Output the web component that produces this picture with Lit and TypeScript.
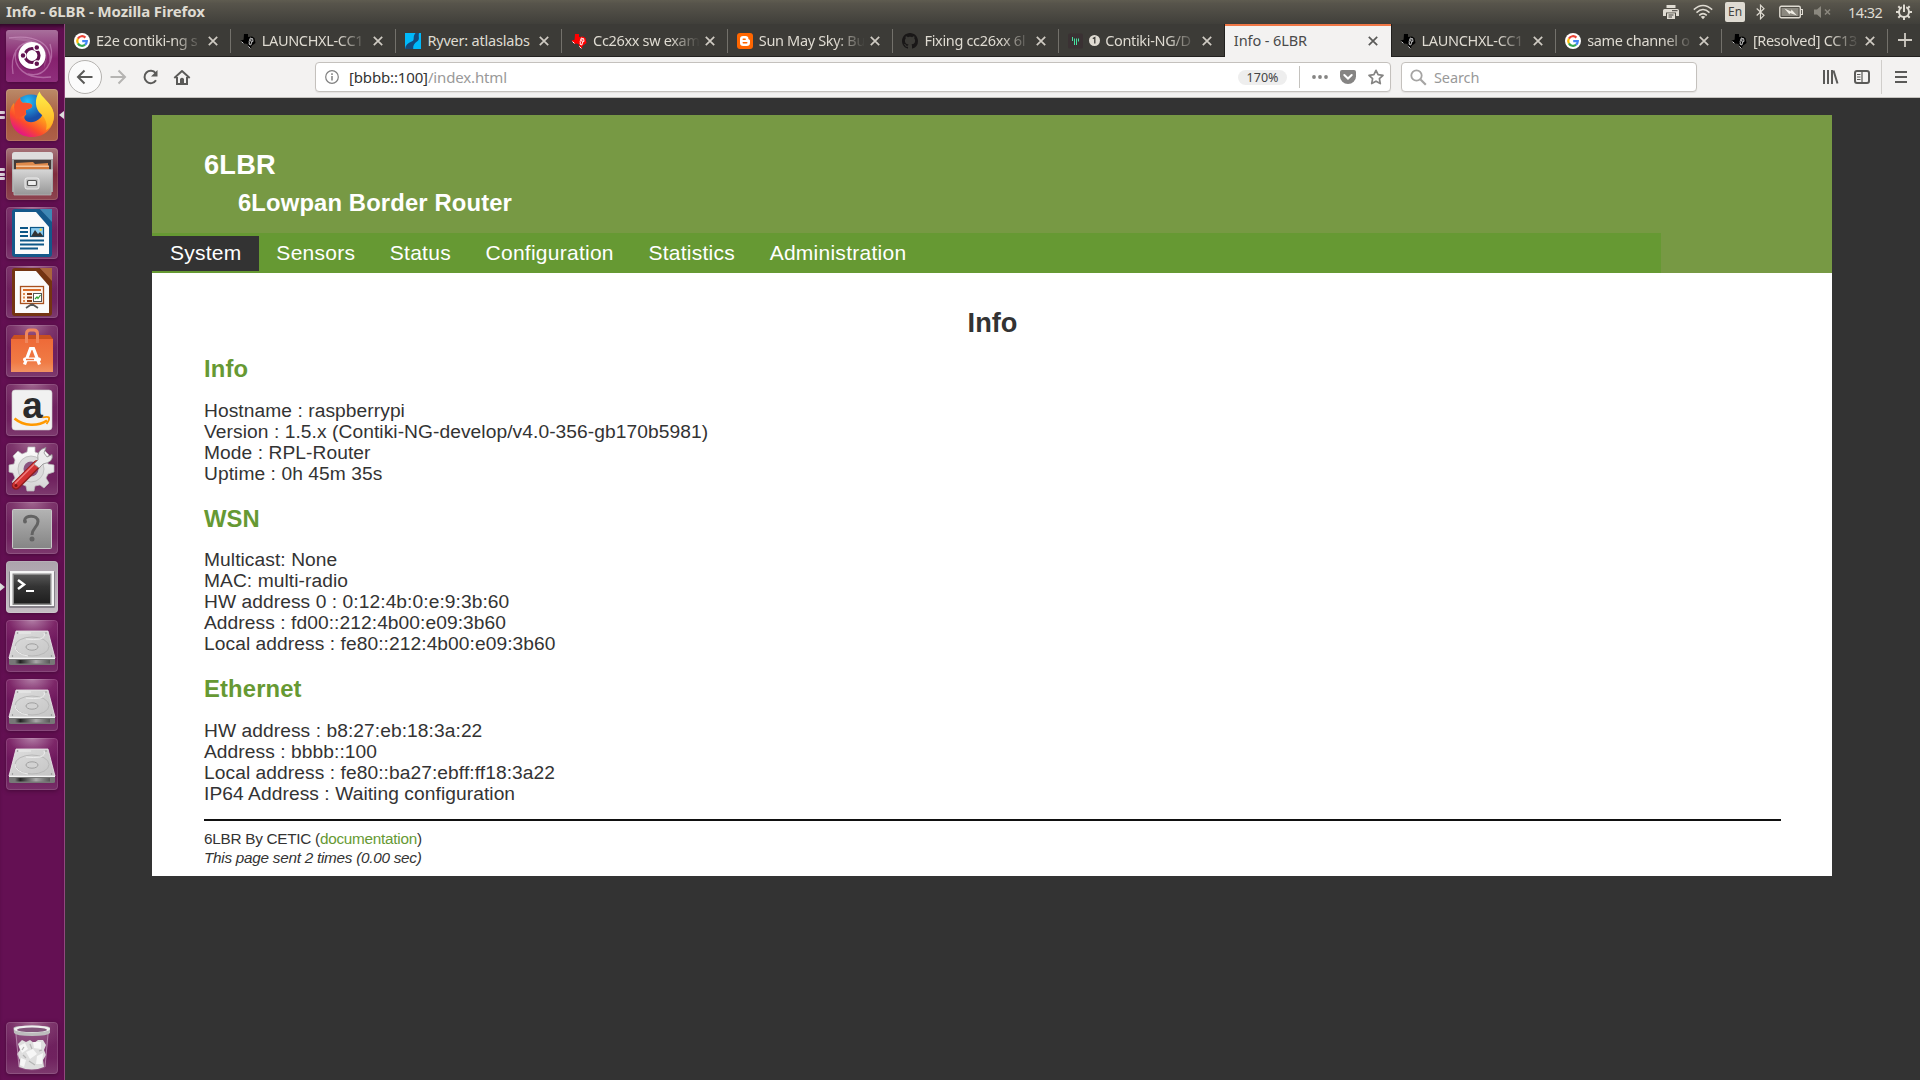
import { LitElement, html, css, svg, nothing } from "lit";
import { customElement } from "lit/decorators.js";

const google = svg`<circle cx="8" cy="8" r="8" fill="#fff"/>
  <g fill="none" stroke-width="2.2">
  <path d="M11.4 4.6A4.8 4.8 0 0 0 3.9 5.6" stroke="#ea4335"/>
  <path d="M3.9 5.6A4.8 4.8 0 0 0 3.9 10.4" stroke="#fbbc05"/>
  <path d="M3.9 10.4A4.8 4.8 0 0 0 11.1 11.7" stroke="#34a853"/>
  <path d="M11.1 11.7A4.8 4.8 0 0 0 12.8 8.2H8.2" stroke="#4285f4"/></g>`;
const texas = (c: string, edge: string) => svg`
  <path d="M4 1H8V4L12 3.5L14.5 5L15.5 10L11.5 13L11 15.5L8.500 14L7.500 11L5 10.500L3.500 11L0.500 7.500L3.600 6.800Z" fill="${c}"/>
  <path d="M11 4.600C9.800 5 9.900 7 9 8.500M9.400 8.600L9.100 11.200L10.800 12L11.600 9.200L13 8.400L12.600 5.600L11.200 5.400L10.600 8.200L11.800 8.400M1.500 8.600L3.500 10.400M8.300 13.400L10.400 15.400" fill="none" stroke="${edge}" stroke-width="1"/>`;
const ryver = svg`<rect width="16" height="16" fill="#00b9fb"/>
  <path d="M10.500 0H14C13 4.500 15.400 6 12 8.600C9 10.800 8 12.500 8.200 16H0C.6 12 3 10 6.600 8.600C10.500 7 7 4 10.500 0Z" fill="#14497c"/>`;
const blogger = svg`<rect width="16" height="16" rx="3" fill="#ff6600"/>
  <path d="M6 3H8.600A2.800 2.800 0 0 1 11.400 5.800C11.400 6.800 13 6.400 13 7.600V9.800A3.200 3.200 0 0 1 9.800 13H6.200A3.200 3.200 0 0 1 3 9.800V6A3 3 0 0 1 6 3Z" fill="#fff"/>
  <path d="M6.200 6.200H8.200M6.200 9.800H9.800" stroke="#ff6600" stroke-width="1.400" stroke-linecap="round"/>`;
const github = svg`<path fill="#191717" fill-rule="evenodd" d="M8 0C3.58 0 0 3.58 0 8c0 3.54 2.29 6.53 5.47 7.59.4.07.55-.17.55-.38 0-.19-.01-.82-.01-1.49-2.01.37-2.53-.49-2.69-.94-.09-.23-.48-.94-.82-1.13-.28-.15-.68-.52-.01-.53.63-.01 1.08.58 1.23.82.72 1.21 1.87.87 2.33.66.07-.52.28-.87.51-1.07-1.78-.2-3.64-.89-3.64-3.95 0-.87.31-1.59.82-2.15-.08-.2-.36-1.02.08-2.12 0 0 .67-.21 2.2.82.64-.18 1.32-.27 2-.27s1.36.09 2 .27c1.53-1.04 2.2-.82 2.2-.82.44 1.1.16 1.92.08 2.12.51.56.82 1.27.82 2.15 0 3.07-1.87 3.75-3.65 3.95.29.25.54.73.54 1.48 0 1.07-.01 1.93-.01 2.2 0 .21.15.46.55.38A8.01 8.01 0 0 0 16 8c0-4.42-3.58-8-8-8z"/>`;
const gitter = svg`<rect y=".5" width="15" height="15" rx="1.500" fill="#3a3133"/>
  <path d="M4.500 4V8M6.500 5.500V12M8.500 5.500V12M10.500 5.500V8.500" stroke="#46e3a0" stroke-width="1"/>`;

interface Tab { title: string; icon: unknown; active?: boolean; badge?: boolean; whole?: boolean }
const tabs: Tab[] = [
  { title: "E2e contiki-ng s", icon: google },
  { title: "LAUNCHXL-CC1", icon: texas("#000", "#ccc") },
  { title: "Ryver: atlaslabs", icon: ryver, whole: true },
  { title: "Cc26xx sw exam", icon: texas("#f00", "#fff") },
  { title: "Sun May Sky: Bu", icon: blogger },
  { title: "Fixing cc26xx 6l", icon: github },
  { title: "Contiki-NG/D", icon: gitter, badge: true },
  { title: "Info - 6LBR", icon: null, active: true },
  { title: "LAUNCHXL-CC1", icon: texas("#000", "#ccc") },
  { title: "same channel o", icon: google },
  { title: "[Resolved] CC13", icon: texas("#000", "#ccc") },
];

const ubuntu = svg`<defs><linearGradient id="ub" x1="0" y1="0" x2="0" y2="1"><stop offset="0" stop-color="#a8709c"/><stop offset=".55" stop-color="#86216e"/><stop offset="1" stop-color="#8f2f7c"/></linearGradient></defs>
  <rect width="52" height="52" rx="3" fill="url(#ub)"/>
  <g fill="none" stroke="#dfb0d6" stroke-opacity=".45" stroke-width="1.3"><path d="M3 8C30 4 46 14 44 32M44 14C50 32 38 48 22 44M7 44C4 24 12 12 26 12M10 20C6 38 20 50 45 47"/></g>
  <path d="M4 9C32 4 48 20 38 38L38 20 24 12Z" fill="#fff" opacity=".13"/>
  <circle cx="26" cy="26.500" r="14" fill="#5b1650" opacity=".45"/><circle cx="26" cy="25.500" r="13.600" fill="#fff"/>
  <circle cx="26" cy="25.500" r="7" fill="none" stroke="#61124f" stroke-width="3.200"/>
  <g fill="#61124f" stroke="#fff" stroke-width="1.300"><circle cx="17" cy="25.500" r="2.900"/><circle cx="30.800" cy="17.400" r="2.900"/><circle cx="30.800" cy="33.700" r="2.900"/></g>`;
const firefox = svg`<defs><linearGradient id="fx" x1=".8" y1=".1" x2=".2" y2=".9"><stop offset="0" stop-color="#ffe226"/><stop offset=".4" stop-color="#ff9a1c"/><stop offset=".72" stop-color="#fb4a2d"/><stop offset="1" stop-color="#e31587"/></linearGradient>
  <radialGradient id="fb" cx=".4" cy=".2"><stop offset="0" stop-color="#23c0f8"/><stop offset="1" stop-color="#1a4ea8"/></radialGradient>
  <linearGradient id="fy" x1="0" y1="0" x2="0" y2="1"><stop offset="0" stop-color="#fff14a"/><stop offset="1" stop-color="#ffac1f"/></linearGradient></defs>
  <circle cx="25" cy="23" r="17.500" fill="url(#fb)"/>
  <path d="M4 26C3.500 20 6 16 8 14L9 18C10 13 12 10 14 8.500C14 11 15 13 17 14C21 13.500 25 14.500 26 16C27 18 24 20 20 21C19 23 21 24 20 26C17 27 18 32 23 33C29 34 36 30 38 22C40 19 36 12 34 9C41 11 47 17 48 26C48 39 39 48 26 48C13 48 4 39 4 26Z" fill="url(#fx)"/>
  <path d="M33.500 2.500C35 8 45 13 47.500 24C49 32 45 39 40 41C42 34 39 29 35 25C29 20 28 10 33.500 2.500Z" fill="url(#fy)"/>
  <path d="M8 18C9 13 12 10 14 8.500C14 11 15 13 17 14C21 13.500 25 14.500 26 16C27 18 24 20 20 21C19 23 21 24 19 26L10 30Z" fill="#f9512c"/>`;
const files = svg`<defs><linearGradient id="fi" x1="0" y1="0" x2="0" y2="1"><stop offset="0" stop-color="#d6d6d6"/><stop offset="1" stop-color="#969696"/></linearGradient></defs>
  <path d="M6 8Q6 4 9 4H44Q47 4 47 8V44H6Z" fill="#a3a3a3"/><path d="M6 11V7Q6 4 9 4H44Q47 4 47 7V11Z" fill="#dedede"/><path d="M8 12H45V24H8Z" fill="#443b38"/>
  <path d="M10 15L27 14 29 16 42 15V24H10Z" fill="#df8a4b"/><path d="M10 17.500H43V24H10Z" fill="#f5c49a"/><path d="M10 19H43V24H10Z" fill="#d47b3a"/>
  <path d="M6.500 21.500H46.500L45 47H8Z" fill="url(#fi)" stroke="#bbb" stroke-width=".7"/>
  <rect x="19" y="30" width="14" height="11" rx="2" fill="#c6c6c6" stroke="#eee"/><rect x="21.500" y="32.500" width="9" height="5" rx="1" fill="#eee" stroke="#555" stroke-width="1.200"/>`;
const doc = (a: string, b: string, inner: unknown) => svg`<path d="M9 2H34L46 14V47Q46 50 43 50H9Q6 50 6 47V5Q6 2 9 2Z" fill="${a}"/>
  <path d="M9 5H30L43 20V47H9Z" fill="#fbfbfb"/><path d="M34 2H46V15Z" fill="${b}"/>${inner}`;
const writer = doc("#14588a", "#3d88b5", svg`<g stroke="#0d5787" stroke-width="2"><path d="M14 21H22M14 25H22M14 29H22M14 33.500H38M14 37.500H38M14 41.500H32"/></g>
  <rect x="24.500" y="20.500" width="13" height="9" fill="#8ccdf0" stroke="#0d5787" stroke-width="1.200"/><path d="M25 29.500L29 23 32 27 34 25 37.500 29.500Z" fill="#333"/><circle cx="34.700" cy="22.700" r="1.200" fill="#f5d33b"/>`);
const impress = doc("#743412", "#a9653c", svg`<rect x="14.500" y="20.500" width="23" height="17" fill="#fff4ea" stroke="#a8501e" stroke-width="1.300"/>
  <path d="M17 24H35" stroke="#d96c28" stroke-width="2"/><path d="M17 28H19M17 31.500H19M17 35H19" stroke="#e08a50" stroke-width="2"/><path d="M21 28H26M21 31.500H26M21 35H26" stroke="#8c3b12" stroke-width="1.800"/>
  <rect x="27.500" y="27.500" width="8" height="8" fill="#fff" stroke="#555"/><path d="M29 33L31 31 32 32.500 34.500 29" stroke="#2ca02c" fill="none" stroke-width="1.200"/><path d="M26 38L20 42M26 38L32 42M26 38V40" stroke="#555" stroke-width="1.700"/>`);
const software = svg`<defs><linearGradient id="sw" x1="0" y1="0" x2="0" y2="1"><stop offset="0" stop-color="#ee6a38"/><stop offset=".7" stop-color="#f07b45"/><stop offset="1" stop-color="#f29262"/></linearGradient></defs>
  <path d="M8 10H44L47 14H5Z" fill="#c94f20"/><rect x="5" y="14" width="42" height="33" fill="url(#sw)"/>
  <path d="M20.500 18V9Q20.500 5 24 5H28Q31.500 5 31.500 9V18" fill="none" stroke="#f0875d" stroke-width="3"/>
  <path d="M18.500 39.500L24.500 23.500H27.500L33.500 39.500" fill="none" stroke="#fff" stroke-width="3.200"/><rect x="17" y="32.500" width="18" height="3.800" rx="1.900" fill="#fff"/><path d="M20 34.500H28" stroke="#ef7640" stroke-width="1.400"/>`;
const amazon = svg`<rect x="6" y="6" width="40" height="40" rx="3" fill="#f1f1f1" stroke="#ccc" stroke-width=".6"/>
  <text x="26.500" y="34" text-anchor="middle" font-family="Liberation Sans" font-weight="700" font-size="37" fill="#2b2b2b">a</text>
  <path d="M8.500 34.500C18 42.500 32 42.500 41 36.500" fill="none" stroke="#f90" stroke-width="2.600"/><path d="M36.500 33.500C40 32.500 42 32.500 43 33.500C43.500 35 42 38 40.500 40" fill="none" stroke="#f90" stroke-width="1.800"/>`;
const settings = svg`<defs><linearGradient id="ge" x1="0" y1="0" x2="0" y2="1"><stop offset="0" stop-color="#fff"/><stop offset="1" stop-color="#d2d2d2"/></linearGradient></defs>
  <path d="M22 4H29V9L34 11 38 7 43 12 40 16.500 42 21 48 22V29L42 31 40 35 43 40 38 45 34 42 29 43 28 48H21L20 43 15 41 11 44 6 39 9 35 7 30 3 29V22L8 21 9 17 7 13 12 8 16 11 21 9Z" fill="url(#ge)" stroke="#bcbcbc" stroke-width=".7"/>
  <circle cx="25" cy="26" r="13" fill="#dcdcdc" stroke="#c2c2c2"/><circle cx="25" cy="26" r="7.500" fill="#8a5580"/>
  <path d="M31 21.500L10 42.500" stroke="#8d1c1c" stroke-width="8.500" stroke-linecap="round"/><path d="M31 21L10 42" stroke="#d23333" stroke-width="6.500" stroke-linecap="round"/><path d="M29 20.500L9 40.500" stroke="#ef8080" stroke-width="1.500"/>
  <path d="M28 21L32 17Q30 7 40 4.500L38 10 41 14 46 11.500Q48 19 37 21L33 25Z" fill="#ececec" stroke="#8f8f8f" stroke-width=".8"/><circle cx="10" cy="42.500" r="1.500" fill="#7a1515"/>`;
const unknown = svg`<defs><linearGradient id="un" x1="0" y1="0" x2="0" y2="1"><stop offset="0" stop-color="#b3b3b3"/><stop offset="1" stop-color="#858585"/></linearGradient></defs>
  <rect x="6.500" y="7.500" width="39" height="39" rx="1" fill="url(#un)" stroke="#c8c8c8"/>
  <path d="M18.500 19C18.500 12.500 32 12.500 32 19.500C32 25 26 26 26 33" fill="none" stroke="#636363" stroke-width="3"/><circle cx="19" cy="19.500" r="1.900" fill="#636363"/><circle cx="26" cy="37" r="2.500" fill="#636363"/>`;
const terminal = svg`<defs><linearGradient id="te" x1="0" y1="0" x2="0" y2="1"><stop offset="0" stop-color="#555"/><stop offset=".4" stop-color="#343434"/><stop offset="1" stop-color="#1e1e1e"/></linearGradient></defs>
  <rect x="3" y="10" width="46" height="37" rx="1.500" fill="#87828a"/><rect x="4" y="10" width="44" height="35" fill="#f5f5f5"/><rect x="6.500" y="12.500" width="39" height="31.500" fill="#8a8a8a"/><rect x="8" y="14" width="36" height="28.500" fill="url(#te)"/>
  <path d="M12 19L18 23.500 12 28" fill="none" stroke="#fff" stroke-width="2.500"/><path d="M20 30H28" stroke="#fff" stroke-width="2"/>`;
const drive = svg`<defs><linearGradient id="dr" x1="0" y1="0" x2="1" y2="1"><stop offset="0" stop-color="#dedede"/><stop offset="1" stop-color="#c4c4c4"/></linearGradient><linearGradient id="ds"><stop offset="0" stop-color="#777"/><stop offset=".15" stop-color="#222"/><stop offset=".6" stop-color="#aaa"/><stop offset="1" stop-color="#555"/></linearGradient></defs>
  <path d="M10 11H42L49 38H3Z" fill="url(#dr)" stroke="#eee" stroke-width=".8"/><path d="M3 38H49V44Q49 45 47 45H5Q3 45 3 44Z" fill="#777"/><rect x="9" y="40" width="35" height="3.500" fill="url(#ds)"/><path d="M3 38.500H49" stroke="#f5f5f5"/>
  <ellipse cx="26" cy="26.500" rx="17" ry="9.500" fill="none" stroke="#b8b8b8"/><path d="M13 13H25M38 13Q40 17 34 19Q28 20 20 19M9 26A17 9.500 0 0 0 22 36" fill="none" stroke="#eee"/>
  <ellipse cx="26" cy="27" rx="6" ry="3.200" fill="#d2d2d2" stroke="#a0a0a0"/><g fill="#888"><circle cx="11.500" cy="13" r=".7"/><circle cx="40" cy="13" r=".7"/><circle cx="6.500" cy="36" r=".7"/><circle cx="45.500" cy="36" r=".7"/></g>`;
const trash = svg`<path d="M9 10H43L39 46Q26 51 13 46Z" fill="#fff" opacity=".12"/>
  <path d="M12 22L16 18 20 20 24 18 28 21 32 18 37 18 40 23 38 28 40 33 37 38 38 45Q26 50 13 45L14 38 11 32 14 28Z" fill="#dedede"/>
  <path d="M13 24L19 21 22 27 16 31ZM27 20L35 20 35 27 28 26ZM20 30L27 27 31 32 24 37ZM31 34L37 31 36 42 30 42ZM15 36L20 38 18 45 14 43Z" fill="#f6f6f6"/>
  <path d="M17 33L20 36M24 22L26 27M33 29L36 28M23 39L29 43M18 25L16 28" stroke="#b5b5b5" stroke-width="1.200"/>
  <path d="M10 12L13 45M42 12L39 45" stroke="#bc91b4" stroke-width=".8"/>
  <path d="M7.500 6Q7.500 3.500 26 3.500T44 6V11Q42 14 26 14T8 11Z" fill="#bdbdbd"/><ellipse cx="26" cy="7" rx="18" ry="3.600" fill="#f0f0f0"/><ellipse cx="26" cy="7.800" rx="15" ry="2.300" fill="#81567a"/>`;

interface Tile { icon: unknown; cls: string; pips?: number; focus?: boolean }
const tiles: Tile[] = [
  { icon: ubuntu, cls: "dash" }, { icon: firefox, cls: "orange", pips: 2, focus: true }, { icon: files, cls: "red", pips: 3 },
  { icon: writer, cls: "" }, { icon: impress, cls: "" }, { icon: software, cls: "" }, { icon: amazon, cls: "" },
  { icon: settings, cls: "" }, { icon: unknown, cls: "" }, { icon: terminal, cls: "light", pips: 1 },
  { icon: drive, cls: "disk" }, { icon: drive, cls: "disk" }, { icon: drive, cls: "disk" },
];

const sections = [
  { name: "Info", cls: "", lines: ["Hostname : raspberrypi", "Version : 1.5.x (Contiki-NG-develop/v4.0-356-gb170b5981)", "Mode : RPL-Router", "Uptime : 0h 45m 35s"] },
  { name: "WSN", cls: "tight", lines: ["Multicast: None", "MAC: multi-radio", "HW address 0 : 0:12:4b:0:e:9:3b:60", "Address : fd00::212:4b00:e09:3b60", "Local address : fe80::212:4b00:e09:3b60"] },
  { name: "Ethernet", cls: "", lines: ["HW address : b8:27:eb:18:3a:22", "Address : bbbb::100", "Local address : fe80::ba27:ebff:ff18:3a22", "IP64 Address : Waiting configuration"] },
];

@customElement("app-root")
export class AppRoot extends LitElement {
  static styles = css`
    :host { display: flex; flex-direction: column; width: 1920px; height: 1080px; overflow: hidden; background: #333; font-family: "Noto Sans", "Open Sans", sans-serif; }
    * { box-sizing: border-box; }
    svg { display: block; flex: none; }
    .panel { height: 24px; flex: none; display: flex; align-items: center; justify-content: space-between; padding: 0 8px 0 6px; background: linear-gradient(#5f5c50, #57544b 15%, #403f3a); color: #dfdbd2; }
    .title { font-size: 15px; font-weight: 700; letter-spacing: -.09px; line-height: 22px; padding-bottom: 2px; white-space: pre; }
    .tray { display: flex; align-items: center; }
    .clock { font-size: 14.500px; line-height: 24px; width: 36px; letter-spacing: -.55px; margin: 0 12px 0 16px; white-space: nowrap; }
    .lang { width: 20px; height: 20px; border-radius: 2px; background: #dfdbd2; color: #45433e; font-size: 12px; line-height: 20px; text-align: center; margin: 0 11px 0 12px; }
    .wifi { margin-left: 14px; }
    .battery { margin-left: 14px; }
    .sound { margin-left: 11px; }
    .body { flex: 1; display: flex; min-height: 0; }
    .launcher { width: 65px; flex: none; display: flex; flex-direction: column; justify-content: space-between; background: #641053; border-right: 1px solid #92487f; padding: 6px 0; box-shadow: inset 0 5px 5px -3px #25061e; }
    .tiles { display: flex; flex-direction: column; gap: 7px; }
    .slot { display: grid; grid-template-columns: 6px 52px 6px; align-items: center; height: 52px; }
    .pips { display: flex; flex-direction: column; gap: 1.500px; align-items: flex-start; }
    .pip { width: 4.500px; height: 3px; border-radius: 0 1px 1px 0; background: #dccfd9; }
    .tri { width: 0; border: 4px solid transparent; border-right: 0; border-left: 5px solid #ddd; }
    .focus { width: 0; border: 4px solid transparent; border-left: 0; border-right: 5px solid #ddd; margin-left: 1px; }
    .tile { width: 52px; height: 52px; border-radius: 4px; background: radial-gradient(ellipse 75% 55% at 50% 0, #a0668f 0, rgba(130,60,112,.8) 50%, transparent 100%), linear-gradient(#6c1f5c, #70225f 70%, #7d3a6e); box-shadow: inset 0 0 0 1px rgba(255,255,255,.13), 0 1px 4px rgba(40,0,32,.5); }
    .orange { background: linear-gradient(#bb8a68, #a5573c 60%, #ae6049); }
    .red { background: linear-gradient(#a7777b, #7e2b3c 50%, #8d444f); }
    .light { background: linear-gradient(#aca4ac, #c5bec4); }
    .disk { background: radial-gradient(ellipse 75% 50% at 50% 0, #b17ca5 0, rgba(130,45,108,.7) 60%, transparent 100%), linear-gradient(#70165f, #6c1a5b 70%, #783069); }
    .browser { flex: 1; display: flex; flex-direction: column; min-width: 0; }
    .tabs { height: 33px; flex: none; display: flex; background: #3c3b37; border-bottom: 1px solid #22211f; }
    .tab { width: 165.700px; flex: none; height: 32px; display: flex; align-items: center; padding: 1px 0 0 9px; position: relative; color: #dfdbd2; }
    .tab::after { content: ""; position: absolute; right: 0; top: 5px; width: 1px; height: 24px; background: #73716b; }
    .tab.noline::after { display: none; }
    .tab.active { height: 33px; background: #f3f2f1; color: #4a4a4a; border-top: 2px solid #f07746; box-shadow: -1px 0 #22211f, 1px 0 #22211f; align-items: flex-start; }
    .label { flex: 1; margin: -2px 0 0 6px; white-space: pre; overflow: hidden; font-size: 14.500px; line-height: 20px; letter-spacing: -.33px; }
    .faded { -webkit-mask-image: linear-gradient(90deg, #000 calc(100% - 30px), transparent); mask-image: linear-gradient(90deg, #000 calc(100% - 30px), transparent); }
    .whole { letter-spacing: -.2px; }
    .active .label { margin: 3px 0 0; letter-spacing: -.1px; }
    .badge { margin-left: 5px; margin-right: -1px; }
    .close { margin: 0 13px 0 5px; }
    .active .close { margin-top: 9px; }
    .plus { margin: 9px 0 0 10px; }
    .toolbar { height: 41px; flex: none; display: flex; align-items: center; background: #f3f2f1; border-bottom: 1px solid #c4c2be; }
    .url { width: 1076px; height: 30px; margin-left: 124px; display: flex; align-items: center; background: #fff; border: 1px solid #c4c1bd; border-radius: 4px; padding: 0 6px 0 9px; font-size: 15px; line-height: 28px; color: #999; box-shadow: 0 1px 1px #e4e2e0; }
    .addr { margin-left: 10px; flex: 1; white-space: pre; padding-bottom: 1px; letter-spacing: -.15px; }
    .host { color: #333; }
    .zoom { width: 49px; height: 15px; border-radius: 8px; background: #eee; color: #444; font-size: 12.500px; line-height: 15px; text-align: center; }
    .vr { width: 1px; height: 22px; background: #c4c2be; margin: 0 12px; }
    .gap { margin-left: 12px; }
    .search { width: 296px; height: 30px; margin-left: 10px; display: flex; align-items: center; gap: 7px; background: #fff; border: 1px solid #c4c1bd; border-radius: 4px; padding-left: 8px; font-size: 14.500px; letter-spacing: -.1px; color: #999; box-shadow: 0 1px 1px #e4e2e0; }
    .actions { margin-left: 124px; }
    .web { flex: 1; padding: 17px 0 0 87px; font-family: "Liberation Sans", Arial, sans-serif; color: #333; }
    .page { width: 1680px; height: 761px; background: #fff; }
    .head { height: 158px; background: #794; padding-top: 34px; color: #fff; }
    .brand { margin: 0; padding-left: 52px; font-size: 27.200px; line-height: 32px; letter-spacing: .2px; }
    .sub { margin: 8px 0 16px; padding-left: 86px; font-size: 23.800px; line-height: 28px; letter-spacing: .14px; font-weight: 700; }
    .nav { width: 1509px; height: 40px; background: #693; display: flex; padding-top: 3px; }
    .item { height: 35px; line-height: 33px; padding: 0 17.300px; font-size: 21px; letter-spacing: .26px; }
    .current { background: #333; padding-left: 17.900px; padding-right: 17.600px; }
    .content { padding: 34px 51px 0 52px; }
    .big { margin: 0 0 16px; font-size: 27.200px; line-height: 32px; text-align: center; }
    .h2 { margin: 0; color: #693; font-size: 23.800px; line-height: 28px; letter-spacing: .14px; }
    .lines { margin: 17px 0 21px; font-size: 19.200px; line-height: 21px; letter-spacing: .07px; }
    .tight { margin-top: 16px; }
    .last { margin-bottom: 15px; }
    .rule { height: 2px; background: #111; margin-bottom: 8px; }
    .foot { font-size: 15.300px; line-height: 19px; letter-spacing: -.26px; }
    .link { color: #693; }
    .it { font-style: italic; }
  `;

  renderTile(t: Tile) {
    return html`<div class="slot">
      ${t.pips === 1 ? html`<div class="tri"></div>` : html`<div class="pips">${Array.from({ length: t.pips ?? 0 }, () => html`<div class="pip"></div>`)}</div>`}
      <div class="tile ${t.cls}"><svg width="52" height="52" viewBox="0 0 52 52">${t.icon}</svg></div>
      ${t.focus ? html`<div class="focus"></div>` : nothing}
    </div>`;
  }

  renderTab(t: Tab, i: number) {
    return html`<div class="tab ${t.active ? "active noline" : ""} ${i === 6 ? "noline" : ""}">
      ${t.icon ? html`<svg width="16" height="16" viewBox="0 0 16 16">${t.icon}</svg>` : nothing}
      ${t.badge ? html`<svg class="badge" width="11" height="11" viewBox="0 0 11 11"><circle cx="5.500" cy="5.500" r="5.500" fill="#dfdbd2"/><path d="M3.800 3.600L5.800 2.500V8.500" fill="none" stroke="#3c3b37" stroke-width="1.300"/></svg>` : nothing}
      <div class="label ${t.whole ? "whole" : t.active ? "" : "faded"}">${t.title}</div>
      <svg class="close" width="10" height="10" viewBox="0 0 10 10"><path d="M.8.8L9.200 9.200M9.200.8L.8 9.200" stroke="${t.active ? "#5a5a58" : "#cfcbc3"}" stroke-width="1.700"/></svg>
    </div>`;
  }

  render() {
    return html`
      <div class="panel">
        <div class="title">Info - 6LBR - Mozilla Firefox</div>
        <div class="tray">
          <svg width="16" height="16" viewBox="0 0 16 16"><path d="M3.500 1H12.500V4H3.500Z" fill="#dfdbd2"/><path d="M1.500 5H14.500Q16 5 16 6.500V12H13V8.500H3V12H0V6.500Q0 5 1.500 5Z" fill="#dfdbd2"/><path d="M4 9.300H12V15H4Z" fill="#dfdbd2"/><path d="M5.500 11H10.500M5.500 13H9M9 6.700H14.500" stroke="#45433e"/></svg>
          <svg class="wifi" width="20" height="16" viewBox="0 0 20 16"><g fill="none" stroke="#dfdbd2" stroke-width="1.500"><path d="M.8 5.600Q10-2.600 19.200 5.600M3.500 8.600Q10 2.500 16.500 8.600M6.200 11.400Q10 7.800 13.800 11.400"/></g><path d="M7.700 12.800Q10 11 12.300 12.800L10 15.300Z" fill="#dfdbd2"/></svg>
          <div class="lang">En</div>
          <svg width="9" height="16" viewBox="0 0 9 16"><path d="M.7 4.500L8 11.300 4.500 14.800V1.200L8 4.700.7 11.500" fill="none" stroke="#dfdbd2" stroke-width="1.200"/></svg>
          <svg class="battery" width="24" height="14" viewBox="0 0 24 14"><rect x=".8" y="1.300" width="20.500" height="11.400" rx="1.500" fill="none" stroke="#dfdbd2" stroke-width="1.400"/><rect x="2.500" y="3" width="17" height="8" fill="#8b887f"/><path d="M22 4.500H23.500V9.500H22" fill="none" stroke="#dfdbd2" stroke-width="1.200"/><path d="M5.500 3.500L12 6.500 12.500 4.500 18 10.500 11 8 10.500 9.500Z" fill="#efece4"/></svg>
          <svg class="sound" width="18" height="14" viewBox="0 0 18 14"><path d="M0 4.500H3L7 1V13L3 9.500H0Z" fill="#8b887f"/><path d="M11 4.500L16 9.500M16 4.500L11 9.500" stroke="#8b887f" stroke-width="1.500"/></svg>
          <div class="clock">14:32</div>
          <svg width="16" height="16" viewBox="0 0 16 16"><circle cx="8" cy="8" r="5" fill="none" stroke="#dfdbd2" stroke-width="2"/><path d="M8 13V16M0 8H3M13 8H16M2.300 2.300L4.500 4.500M13.700 2.300L11.500 4.500M2.300 13.700L4.500 11.500M13.700 13.700L11.500 11.500" stroke="#dfdbd2" stroke-width="2"/><path d="M5.900 0H10.100V8H5.900Z" fill="#4f4d45"/><path d="M8 .5V8" stroke="#dfdbd2" stroke-width="2"/></svg>
        </div>
      </div>
      <div class="body">
        <div class="launcher">
          <div class="tiles">${tiles.map((t) => this.renderTile(t))}</div>
          ${this.renderTile({ icon: trash, cls: "" })}
        </div>
        <div class="browser">
          <div class="tabs">${tabs.map((t, i) => this.renderTab(t, i))}
            <svg class="plus" width="14" height="14" viewBox="0 0 14 14"><path d="M7 0V14M0 7H14" stroke="#cfcbc3" stroke-width="1.800"/></svg>
          </div>
          <div class="toolbar">
            <svg width="126" height="40" viewBox="65 57 126 40"><circle cx="85" cy="77" r="16.500" fill="#fbfbfb" stroke="#b4b2af"/>
              <g fill="none" stroke="#5a5a58" stroke-width="2"><path d="M92.500 77H78.500M84.500 70.500L78 77 84.500 83.500"/><path d="M110.500 77H124.500M118.500 70.500L125 77 118.500 83.500" stroke="#b5b4b2"/>
              <path d="M155.700 73.300A6.200 6.200 0 1 0 156 80.300"/><path d="M174.300 78L182 71 189.700 78" stroke-linejoin="round" stroke-width="1.900"/><path d="M177 77V84H187V77" stroke-width="2"/></g>
              <path d="M157.500 70V76.500H151Z" fill="#5a5a58"/><path d="M180 79Q182 76.500 184 79V84H180Z" fill="#5a5a58"/></svg>
            <div class="url">
              <svg width="14" height="14" viewBox="0 0 14 14"><circle cx="7" cy="7" r="6.300" fill="none" stroke="#808080" stroke-width="1.200"/><path d="M7 6V10.500M7 3.300V4.900" stroke="#808080" stroke-width="1.500"/></svg>
              <div class="addr"><span class="host">[bbbb::100]</span>/index.html</div>
              <div class="zoom">170%</div><div class="vr"></div>
              <svg width="16" height="16" viewBox="0 0 16 16"><g fill="#858483"><circle cx="2" cy="8" r="1.900"/><circle cx="8" cy="8" r="1.900"/><circle cx="14" cy="8" r="1.900"/></g></svg>
              <svg class="gap" width="16" height="16" viewBox="0 0 16 16"><path d="M2 1H14Q16 1 16 3V7.500A8 7.500 0 0 1 0 7.500V3Q0 1 2 1Z" fill="#858483"/><path d="M4.300 6L8 9.500 11.700 6" fill="none" stroke="#fff" stroke-width="2" stroke-linecap="round"/></svg>
              <svg class="gap" width="16" height="16" viewBox="0 0 16 16"><path d="M8 1.300L10.100 5.700 15 6.300 11.400 9.700 12.300 14.600 8 12.200 3.700 14.600 4.600 9.700 1 6.300 5.900 5.700Z" fill="none" stroke="#858483" stroke-width="1.700" stroke-linejoin="round"/></svg>
            </div>
            <div class="search">
              <svg width="17" height="17" viewBox="0 0 17 17"><circle cx="6.500" cy="6.500" r="5.200" fill="none" stroke="#a5a4a3" stroke-width="1.800"/><path d="M10.500 10.500L15.800 15.800" stroke="#a5a4a3" stroke-width="2.200"/></svg>Search</div>
            <svg class="actions" width="99" height="40" viewBox="1821 57 99 40"><g stroke="#5a5a58" fill="none"><path d="M1824 70V84M1828 70V84M1832 70V84M1833.500 70.500L1837.500 83.500" stroke-width="2"/>
              <rect x="1855" y="71" width="14" height="12" rx="2" stroke-width="2"/><path d="M1862 71V83" stroke-width="1.200"/><path d="M1857 74.500H1860.500M1857 77H1860.500M1857 79.500H1860.500" stroke-width="1"/>
              <path d="M1881.500 60V94" stroke="#d0cecb" stroke-width="1"/><path d="M1895 72H1907M1895 77H1907M1895 82H1907" stroke-width="2"/></g></svg>
          </div>
          <div class="web"><div class="page">
            <div class="head">
              <h1 class="brand">6LBR</h1>
              <div class="sub">6Lowpan Border Router</div>
              <div class="nav">${["System", "Sensors", "Status", "Configuration", "Statistics", "Administration"].map((n, i) => html`<div class="item ${i ? "" : "current"}">${n}</div>`)}</div>
            </div>
            <div class="content">
              <h1 class="big">Info</h1>
              ${sections.map((s, i) => html`<h2 class="h2">${s.name}</h2><div class="lines ${s.cls} ${i === 2 ? "last" : ""}">${s.lines.map((l) => html`<div>${l}</div>`)}</div>`)}
              <div class="rule"></div>
              <div class="foot"><div>6LBR By CETIC (<span class="link">documentation</span>)</div><div class="it">This page sent 2 times (0.00 sec)</div></div>
            </div>
          </div></div>
        </div>
      </div>`;
  }
}
